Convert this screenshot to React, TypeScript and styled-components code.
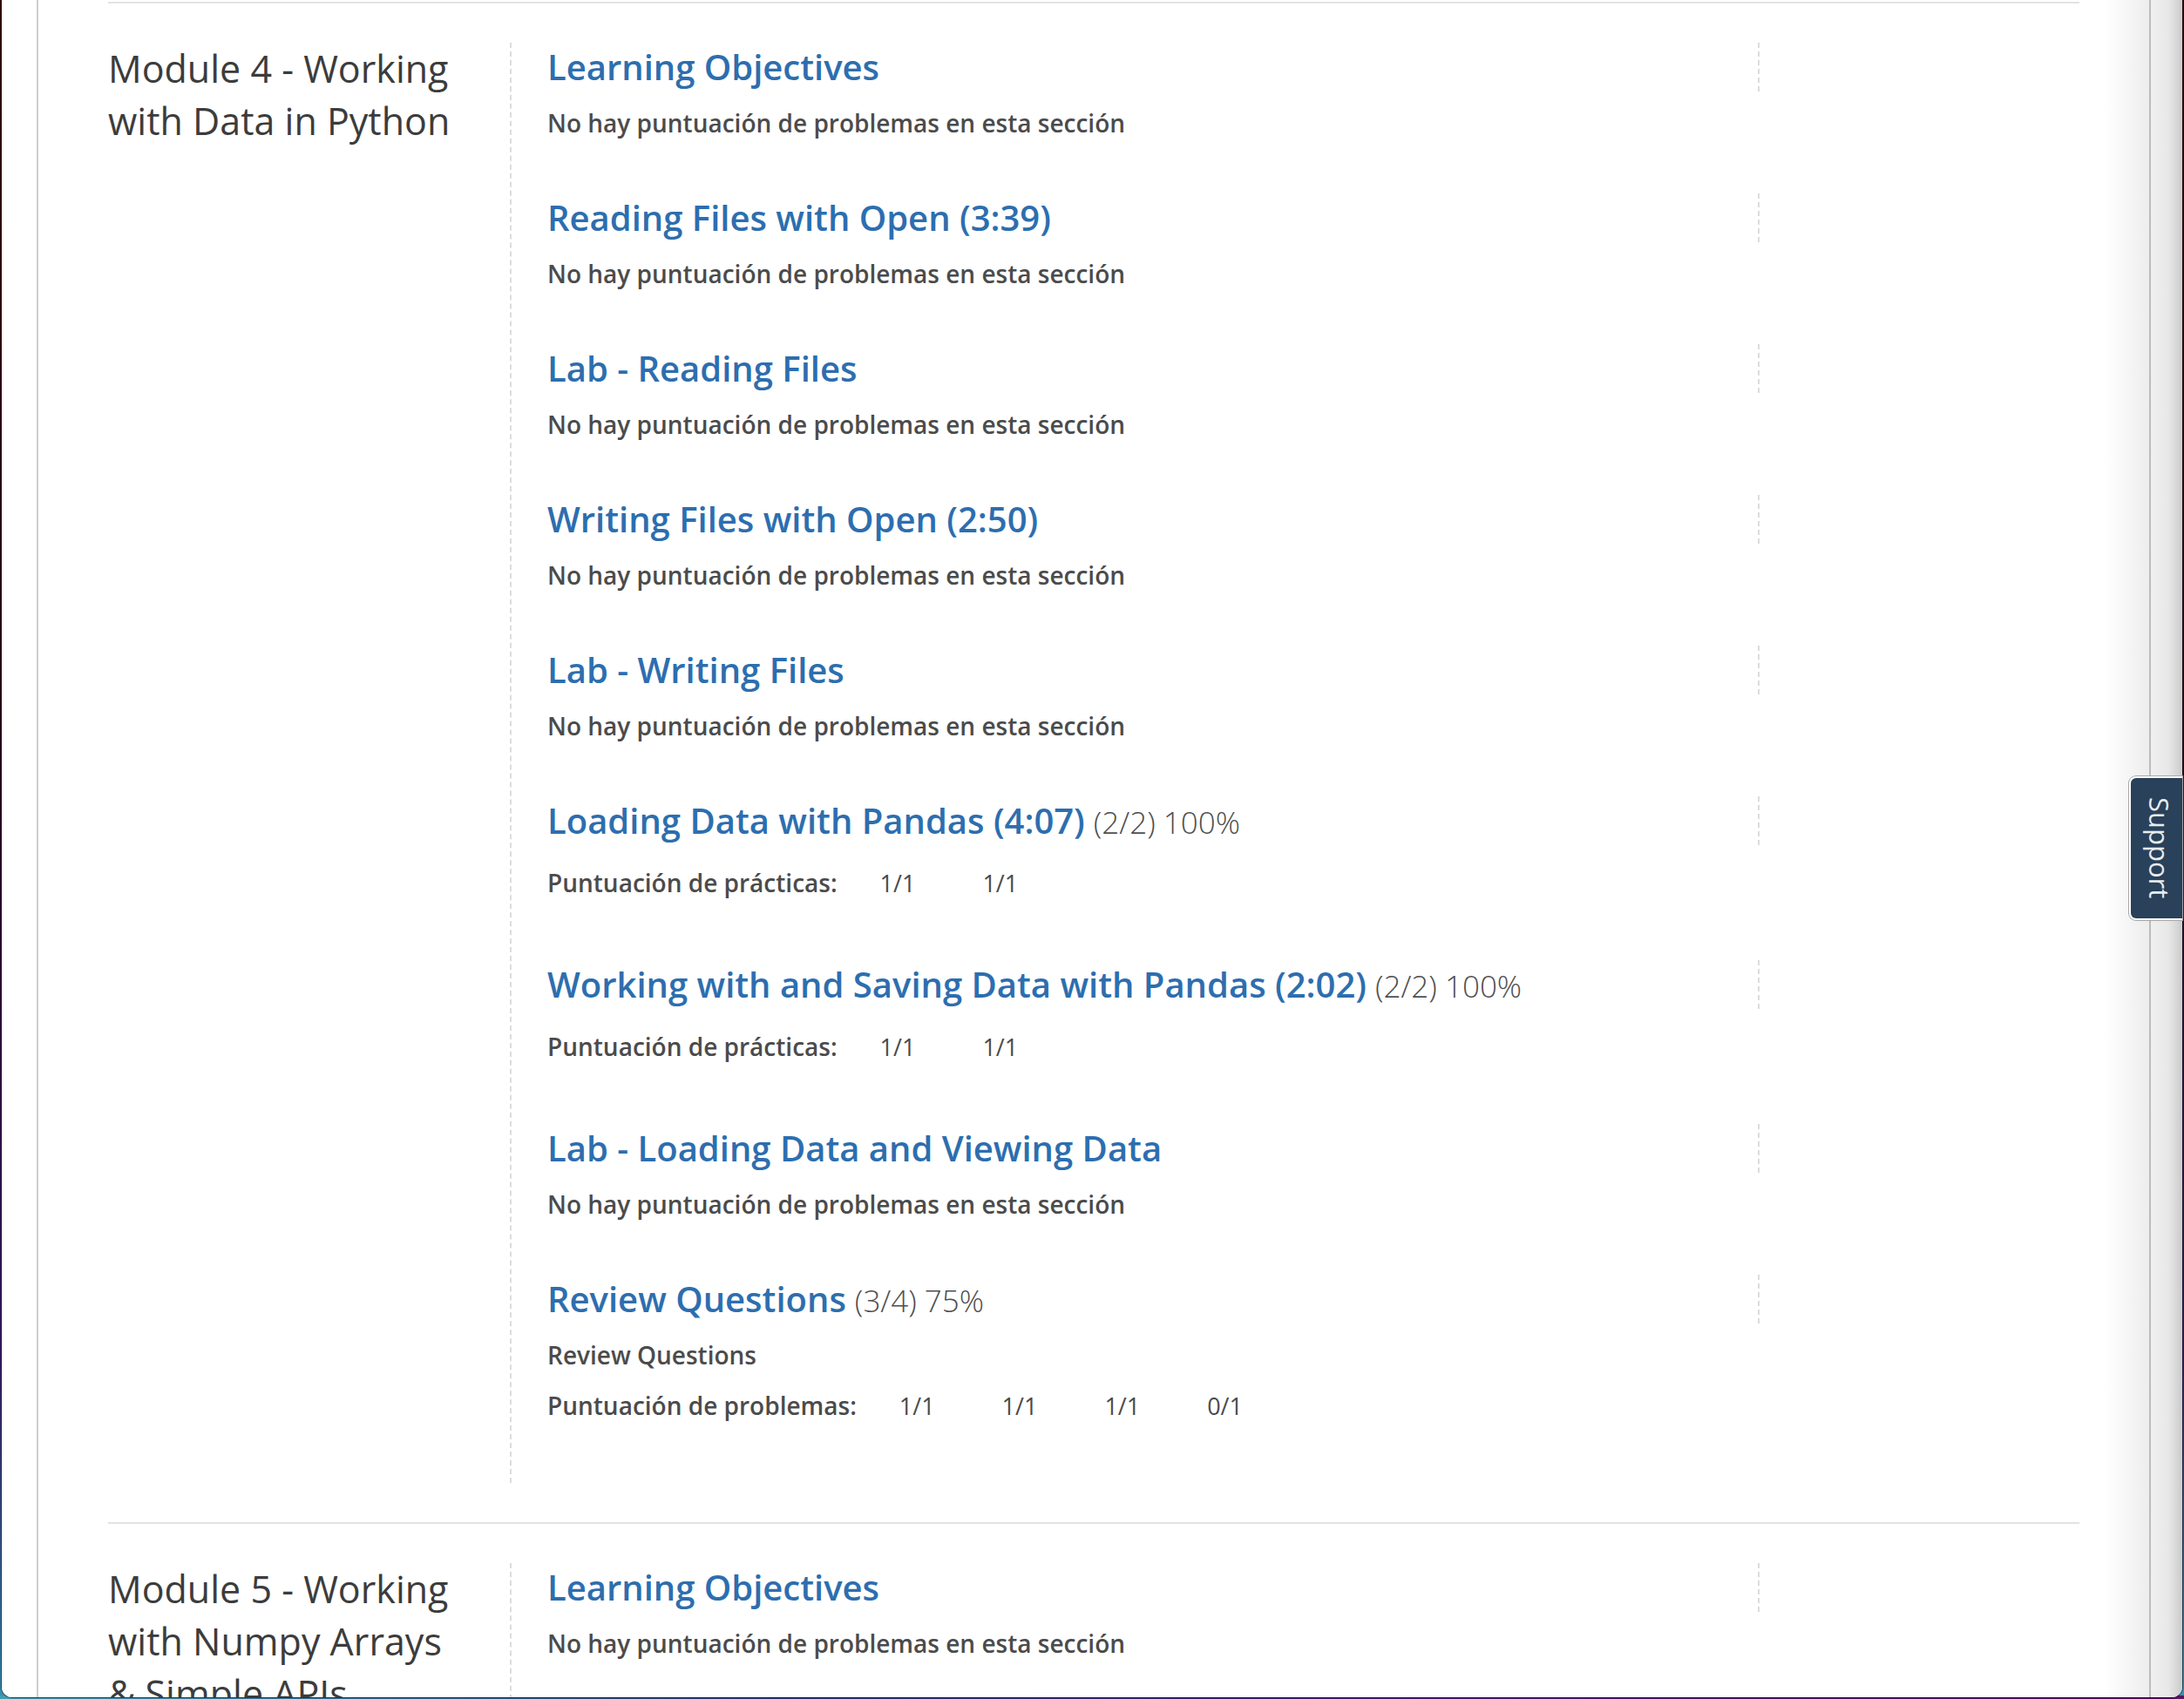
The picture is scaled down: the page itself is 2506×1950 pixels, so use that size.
import React from "react";
import styled, { createGlobalStyle } from "styled-components";

const GlobalStyle = createGlobalStyle`
  html, body { margin: 0; padding: 0; }
  body {
    font-family: "Open Sans", "Noto Sans", sans-serif;
    overflow: hidden;
    -webkit-font-smoothing: antialiased;
  }
`;

const Desktop = styled.div`
  position: relative;
  width: 2506px;
  height: 1950px;
  box-sizing: border-box;
  padding: 0 2px 2px 2px;
  overflow: hidden;
  background:
    linear-gradient(90deg, #3f9fb3 0%, #2b3a7a 35%, #4b1f78 65%, #5a1460 100%) bottom / 100% 4px no-repeat,
    linear-gradient(180deg, #3a0a0e 0%, #2a0c20 45%, #3a1f6a 80%, #3f8fb0 100%);
`;

const Window = styled.div`
  display: flex;
  height: 100%;
  background: #fff;
  border-radius: 0 0 12px 12px;
  overflow: hidden;
  box-shadow: 0 0 0 1px rgba(0, 0, 0, 0.55);
`;

const LeftGutter = styled.div`
  flex: none;
  width: 40px;
  background: #fff;
`;

const Page = styled.main`
  flex: 1;
  min-width: 0;
  padding: 0 80px;
  border-left: 2px solid #cdcdcd;
  border-right: 2px solid #bcbcbc;
  background: linear-gradient(to right, #fff calc(100% - 50px), #ededed 100%);
  overflow: hidden;
`;

const RightGutter = styled.div`
  flex: none;
  width: 36px;
  background: linear-gradient(to right, #f0f0f0 0%, #e8e8e8 55%, #cbcbcb 100%);
`;

const Module = styled.section`
  display: grid;
  grid-template-columns: 461px 1fr;
  align-items: start;
  border-top: 2px solid #e3e3e3;
  padding: 45px 0 45px;

  &:first-child {
    margin-top: 2px;
  }
`;

const ModuleTitle = styled.h2`
  margin: 0;
  max-width: 410px;
  font-size: 43px;
  line-height: 60px;
  font-weight: 400;
  color: #3c3c3c;
`;

const Sections = styled.div`
  border-left: 2px dashed #dcdcdc;
  padding: 0 0 0 41px;
`;

const Item = styled.div`
  display: flex;
  margin-bottom: 61px;
`;

const ItemMain = styled.div`
  flex: 1;
  min-width: 0;
`;

const Marker = styled.div`
  flex: none;
  align-self: flex-start;
  width: 369px;
  height: 56px;
  box-sizing: border-box;
  border-left: 2px dashed #dcdcdc;
`;

const Heading = styled.h3`
  margin: 0;
  height: 56px;
  font-size: 40px;
  line-height: 56px;
  font-weight: 600;
  white-space: nowrap;
`;

const Link = styled.a`
  color: #2d6eaf;
  text-decoration: none;
`;

const Pct = styled.span`
  font-size: 35px;
  font-weight: 300;
  color: #4f4f4f;
  margin-left: 10px;
`;

const Sub = styled.p`
  margin: 16px 0 0;
  font-size: 28px;
  line-height: 40px;
  font-weight: 600;
  color: #4b4b4b;
`;

const ScoreRow = styled.div`
  display: flex;
  align-items: baseline;
  margin-top: 16px;
  line-height: 54px;

  ${Sub} + & {
    margin-top: 11px;
  }
`;

const ScoreLabel = styled.span`
  font-size: 28px;
  font-weight: 600;
  color: #4b4b4b;
  margin-right: 49px;
`;

const Score = styled.span`
  font-size: 27px;
  font-weight: 400;
  color: #4b4b4b;
  margin-right: 77px;
`;

const SupportTab = styled.a`
  position: absolute;
  left: 2443px;
  top: 891px;
  width: 61px;
  height: 165px;
  box-sizing: border-box;
  display: flex;
  align-items: center;
  justify-content: center;
  padding-left: 6px;
  background: #29415a;
  border: 2px solid #fff;
  border-right: none;
  border-radius: 8px 0 0 8px;
  box-shadow: 0 0 0 1px #a9a9a9;
  color: #e8ebee;
  font-size: 31px;
  font-weight: 500;
  line-height: 1;
  writing-mode: vertical-rl;
  text-decoration: none;
`;

type Entry = {
  title: string;
  pct?: string;
  sub?: string;
  scoreLabel?: string;
  scores?: string[];
};

const NO_SCORE = "No hay puntuación de problemas en esta sección";

const modules: { name: string; items: Entry[] }[] = [
  {
    name: "Module 4 - Working with Data in Python",
    items: [
      { title: "Learning Objectives", sub: NO_SCORE },
      { title: "Reading Files with Open (3:39)", sub: NO_SCORE },
      { title: "Lab - Reading Files", sub: NO_SCORE },
      { title: "Writing Files with Open (2:50)", sub: NO_SCORE },
      { title: "Lab - Writing Files", sub: NO_SCORE },
      {
        title: "Loading Data with Pandas (4:07)",
        pct: "(2/2) 100%",
        scoreLabel: "Puntuación de prácticas:",
        scores: ["1/1", "1/1"],
      },
      {
        title: "Working with and Saving Data with Pandas (2:02)",
        pct: "(2/2) 100%",
        scoreLabel: "Puntuación de prácticas:",
        scores: ["1/1", "1/1"],
      },
      { title: "Lab - Loading Data and Viewing Data", sub: NO_SCORE },
      {
        title: "Review Questions",
        pct: "(3/4) 75%",
        sub: "Review Questions",
        scoreLabel: "Puntuación de problemas:",
        scores: ["1/1", "1/1", "1/1", "0/1"],
      },
    ],
  },
  {
    name: "Module 5 - Working with Numpy Arrays & Simple APIs",
    items: [
      { title: "Learning Objectives", sub: NO_SCORE },
      { title: "Numpy 1D Arrays (7:15)", sub: NO_SCORE },
      { title: "Lab - Numpy 1D Arrays", sub: NO_SCORE },
    ],
  },
];

export default function App() {
  return (
    <>
      <GlobalStyle />
      <Desktop>
        <Window>
          <LeftGutter />
          <Page>
            {modules.map((m) => (
              <Module key={m.name}>
                <ModuleTitle>{m.name}</ModuleTitle>
                <Sections>
                  {m.items.map((it, i) => (
                    <Item key={i}>
                      <ItemMain>
                        <Heading>
                          <Link href="#">{it.title}</Link>
                          {it.pct && <Pct>{it.pct}</Pct>}
                        </Heading>
                        {it.sub && <Sub>{it.sub}</Sub>}
                        {it.scores && (
                          <ScoreRow>
                            <ScoreLabel>{it.scoreLabel}</ScoreLabel>
                            {it.scores.map((s, j) => (
                              <Score key={j}>{s}</Score>
                            ))}
                          </ScoreRow>
                        )}
                      </ItemMain>
                      <Marker />
                    </Item>
                  ))}
                </Sections>
              </Module>
            ))}
          </Page>
          <RightGutter />
        </Window>
        <SupportTab href="#">Support</SupportTab>
      </Desktop>
    </>
  );
}
